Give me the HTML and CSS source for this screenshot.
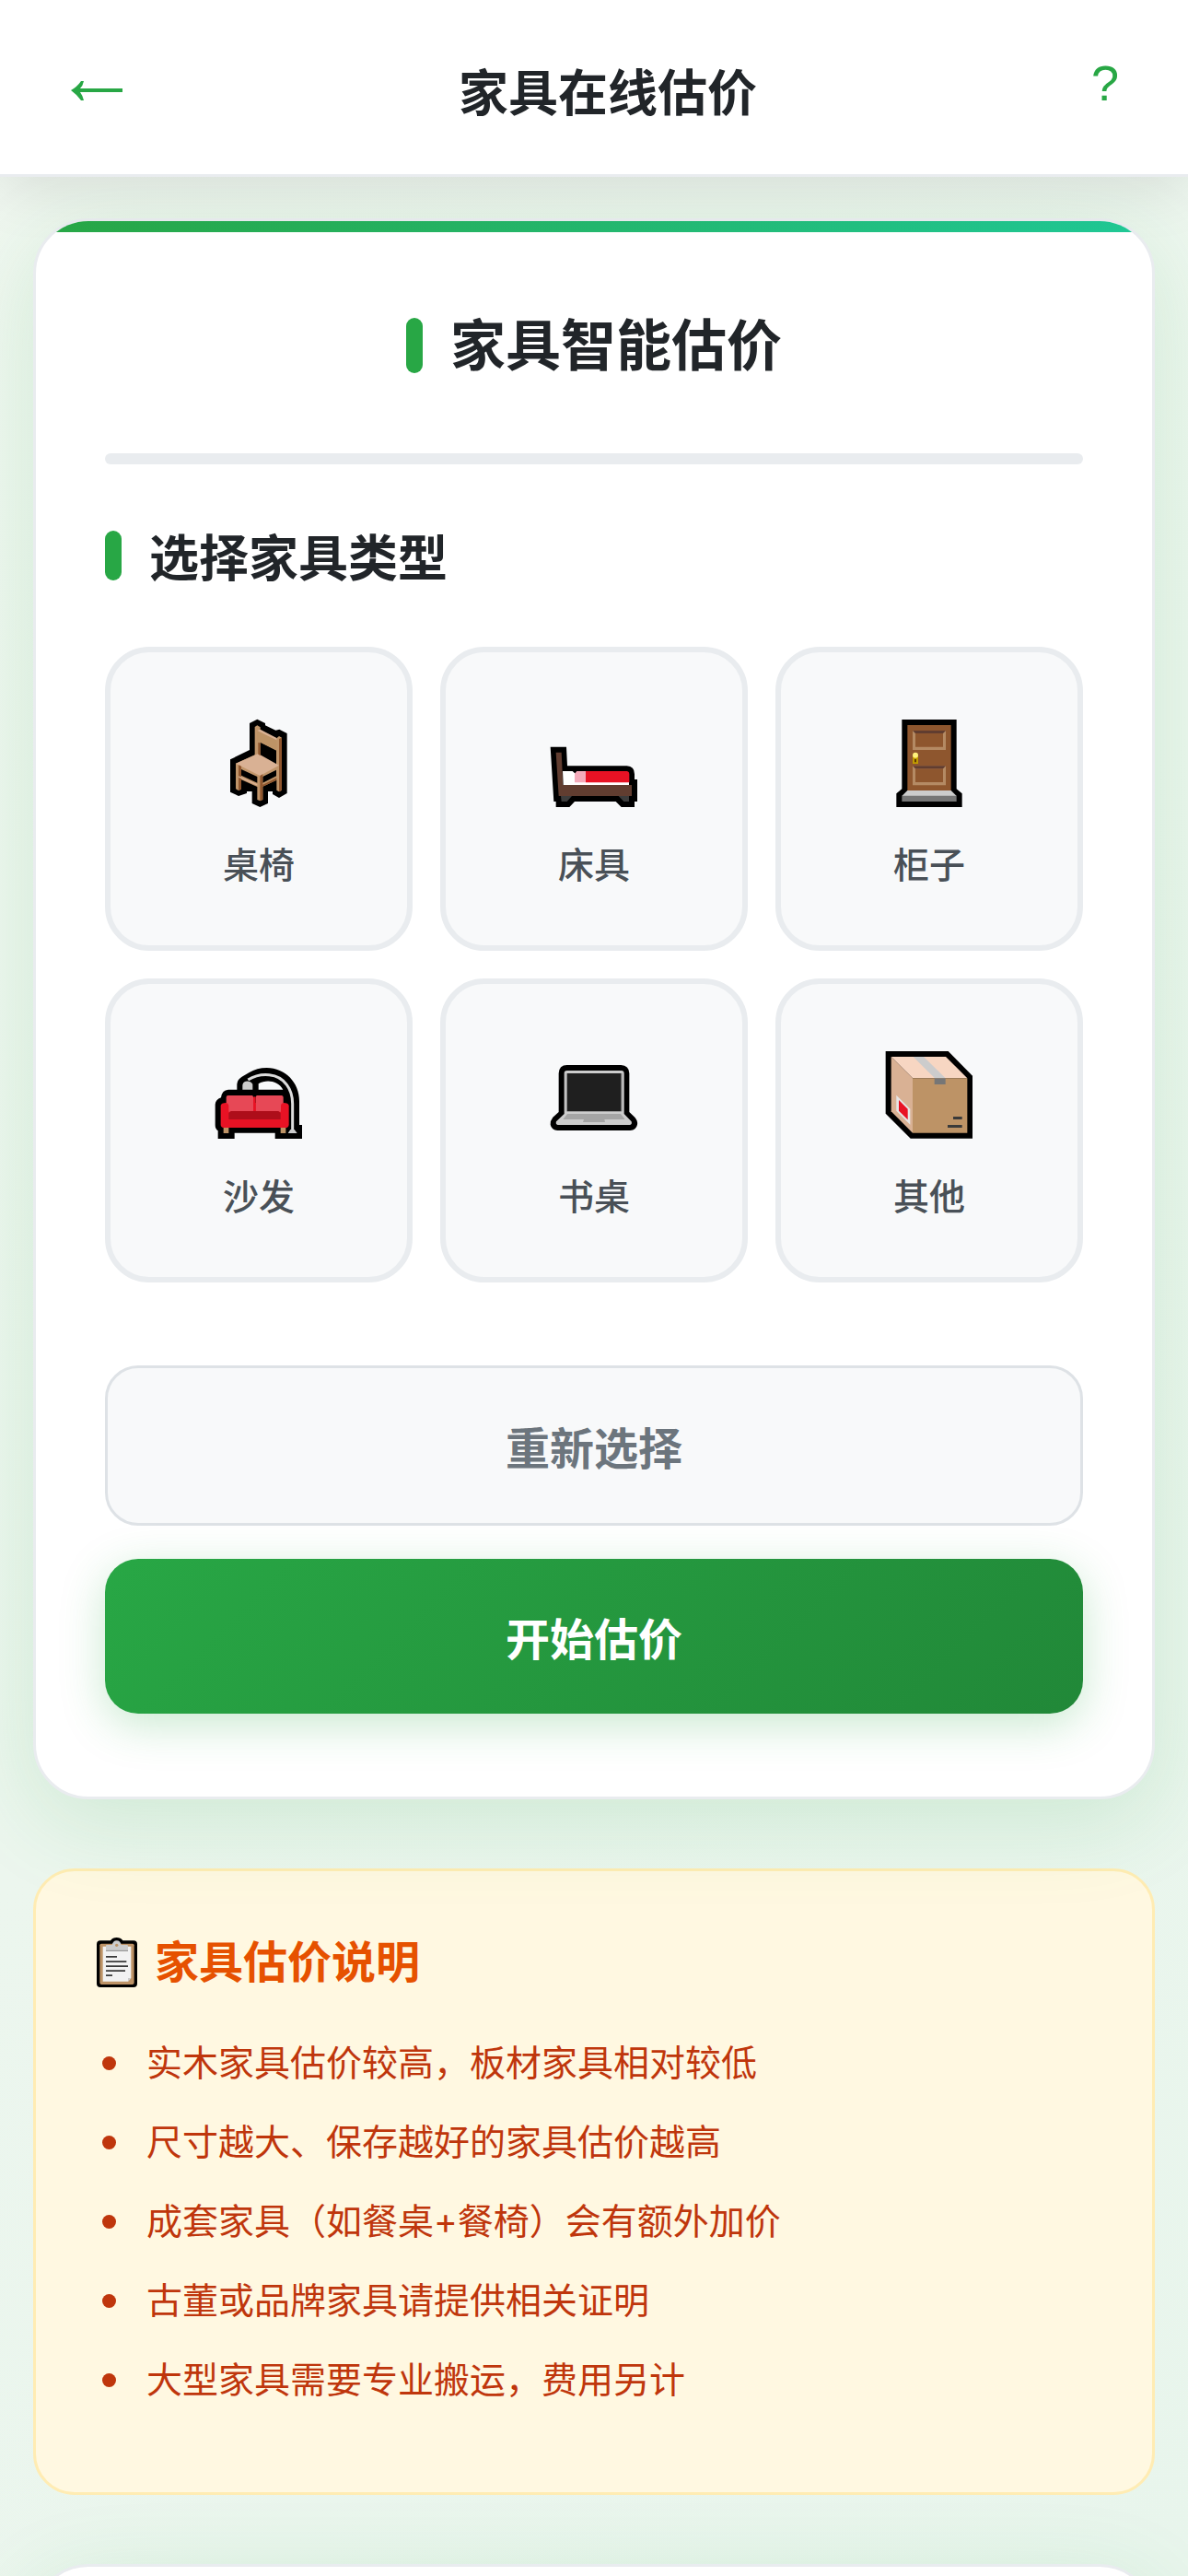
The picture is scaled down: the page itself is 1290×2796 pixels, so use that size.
FILE: index.html
```html
<!DOCTYPE html>
<html lang="zh-CN">
<head>
<meta charset="utf-8">
<meta name="viewport" content="width=device-width, initial-scale=1">
<title>家具在线估价</title>
<link rel="stylesheet" href="styles.css">
</head>
<body>
<header class="topbar">
  <button class="topbar-button" type="button" aria-label="返回">
    <svg class="back-icon" viewBox="0 0 60 60" aria-hidden="true"><path fill="currentColor" d="M2 30Q9 26 13 20H16Q15 25 12 28H58V32H12Q15 36 16 41H13Q9 35 2 30Z"/></svg>
  </button>
  <h1 class="topbar-title">家具在线估价</h1>
  <button class="topbar-button topbar-help" type="button" aria-label="帮助">?</button>
</header>
<main class="content">
  <section class="card card-striped">
    <h2 class="card-title">家具智能估价</h2>
    <hr class="progress">
    <h3 class="section-title">选择家具类型</h3>
    <div class="types">
      <button class="type" type="button">
        <svg class="type-icon" viewBox="39 60 288 288" aria-hidden="true">
          <path d="M153 75 178 62 204 75V82L238 98 250 95 275 108V303L249 318 228 306V297H213V336L187 348 161 336V297H144V303L117 312 90 299V193L153 162Z"/>
          <path fill="#c0956a" d="M170 87 178 82 188 88V98L241 124 249 117 258 122V293L249 298 241 293V260L196 281V324L187 328 178 324V282L126 259V290L117 294 108 289V206L170 178Z"/>
          <path d="M188 137 240 163V210L188 181ZM126 225 178 249V269L126 245ZM196 249 240 227V247L196 269Z"/>
          <path fill="#bd9366" d="M177 99 241 130V164L188 137 177 133Z"/>
          <path fill="#d9b194" d="M108 206 181 174 249 212 187 246ZM188 95 241 123V130L178 99Z"/>
          <path fill="#8f562e" d="M249 126 258 122V293L249 298ZM187 246 196 241V324L187 328ZM117 211 126 215V290L117 294ZM181 137 188 140V181L181 176ZM196 275 241 253V260L196 281Z"/>
          <path fill="#d9b194" d="M118 247 178 273V278L118 252Z"/>
        </svg>
        <span class="type-label">桌椅</span>
      </button>
      <button class="type" type="button">
        <svg class="type-icon" viewBox="51 0 288 288" aria-hidden="true">
          <path d="M53 92H105L108 154H302Q327 155 327 181V198H336V270H327V288H284L266 270H132L115 288H71V270H64Z"/>
          <path fill="#613d30" d="M71 110H89L94 216H318V252H80Z"/>
          <path fill="#fff" d="M93 171H125L134 179H309V216H95Z"/>
          <path fill="#f4aaba" d="M139 171H168V208H132V179Z"/>
          <path fill="#e81224" d="M168 171H303Q310 172 310 180V208H168Z"/>
          <path fill="#3c3c3c" d="M87 252H123L107 270H89ZM275 252H309V270H292Z"/>
        </svg>
        <span class="type-label">床具</span>
      </button>
      <button class="type" type="button">
        <svg class="type-icon" viewBox="33 60 288 288" aria-hidden="true">
          <path d="M88 63H266V289L284 304V348H70V304L88 289Z"/>
          <path fill="#8e562e" d="M106 81H248V294H106Z"/>
          <path fill="#b48a64" d="M123 99H231V162H123ZM123 214H231V277H123Z"/>
          <path fill="#8e562e" d="M132 108H222V152H132ZM132 223H222V267H132Z"/>
          <path fill="#613d30" d="M123 99H231L222 108H132ZM123 214H231L222 223H132Z"/>
          <path fill="#c19c00" d="M123 181H141V207H123Z"/>
          <circle cx="132" cy="179" r="9" fill="#fff27b"/>
          <path fill="#613d00" d="M129 192H135V202H129Z"/>
          <path fill="#ccc" d="M106 294H248L266 312H88Z"/>
          <path fill="#767676" d="M88 311H266V330H88Z"/>
        </svg>
        <span class="type-label">柜子</span>
      </button>
      <button class="type" type="button">
        <svg class="type-icon" viewBox="39 0 288 288" aria-hidden="true">
          <path d="M112 128V110Q113 95 128 86L151 73Q177 57 209 57C270 58 315 105 315 165V243H324V288H236V269H104V288H50V262Q41 256 41 244V176Q42 161 60 154Q63 129 84 128Z"/>
          <path fill="#f8f9fa" d="M182 109C207 94 245 98 262 128H182Z"/>
          <path fill="none" stroke="#dcdcdc" stroke-width="9" d="M148 96C190 70 248 74 274 112Q293 137 293 174V262"/>
          <path fill="#ccc" d="M130 128V113C132 98 154 96 163 110V128ZM286 258H299L308 270H278Z"/>
          <path fill="#bd9366" d="M68 250H85V270H68ZM254 250H271V270H254Z"/>
          <path fill="#e81224" d="M77 171H263Q280 171 281 181V242Q280 252 270 252H68Q59 251 59 242V180Q60 171 77 171Z"/>
          <path fill="#e74856" d="M83 147H161Q165 147 165 152V200H85V180Q84 173 77 171V153Q77 147 83 147ZM178 147H258Q263 148 263 153V171Q255 173 255 180V200H173V152Q173 148 178 147Z"/>
          <path fill="#e81224" d="M165 152Q169 150 173 152V202H165Z"/>
          <path fill="#ae0e1a" d="M92 198H247L254 205V225H85V205Z"/>
        </svg>
        <span class="type-label">沙发</span>
      </button>
      <button class="type" type="button">
        <svg class="type-icon" viewBox="51 0 288 288" aria-hidden="true">
          <path d="M80 75Q81 48 107 48H283Q309 49 310 75V201L328 218Q338 229 336 242Q332 260 313 261H76Q57 260 53 242Q52 229 61 218L80 201Z"/>
          <path fill="#ccc" d="M98 74Q98 66 107 66H284Q293 66 293 75V207L317 232Q320 242 312 243H77Q69 242 72 232L98 207Z"/>
          <path fill="#1f1f1f" d="M107 75H284V199H107Z"/>
          <path fill="#a5a5a5" d="M108 207H282L296 225H229L231 234H159L162 225H94Z"/>
          <path fill="#999" d="M104 75H107V199H104ZM284 75H287V199H284Z"/>
        </svg>
        <span class="type-label">书桌</span>
      </button>
      <button class="type" type="button">
        <svg class="type-icon" viewBox="48 45 288 288" aria-hidden="true">
          <path d="M50 48H254L333 128V332H131L50 251Z"/>
          <path fill="#f7d6c2" d="M68 66H246L316 136H138Z"/>
          <path fill="#d9b194" d="M68 66 138 136V314L68 244Z"/>
          <path fill="#bd9366" d="M138 136H316V314H138Z"/>
          <path fill="#ccc" d="M140 66H174L245 136H210Z"/>
          <path fill="#767676" d="M209 136H245V156H209Z"/>
          <path fill="#e6e6e6" d="M85 191 130 236V287L85 242Z"/>
          <path fill="#e81224" d="M93 207 122 236V271L93 242Z"/>
          <path fill="#3a3a3a" d="M270 261H299V270H270ZM252 288H299V297H252Z"/>
        </svg>
        <span class="type-label">其他</span>
      </button>
    </div>
    <div class="actions">
      <button class="action action-secondary" type="button">重新选择</button>
      <button class="action action-primary" type="button">开始估价</button>
    </div>
  </section>
  <section class="notice">
    <h2 class="notice-title">
      <svg class="notice-icon" viewBox="27 63 162 180" aria-hidden="true">
        <path d="M45 94Q45 82 57 82H90Q97 72 110 72T130 82H165Q177 82 177 94V222Q177 234 165 234H57Q45 234 45 222Z"/>
        <path fill="#bd9366" d="M55 97Q55 92 60 92H162Q167 92 167 97V219Q167 225 161 225H61Q55 225 55 219Z"/>
        <path fill="#f2f2f2" d="M65 101H157V204L147 215H65Z"/>
        <path fill="#ccc" d="M75 98Q75 96 78 96H95Q98 82 110 82T125 96H143Q147 96 147 99V113H75ZM147 215V204H157Z"/>
        <path fill="#999" d="M75 113H147V117H75Z"/>
        <circle cx="110" cy="97" r="5" fill="#bd9366"/>
        <path fill="#3a3a3a" d="M75 132H111V137H75ZM75 148H142V153H75ZM75 163H147V168H75ZM75 178H138V183H75ZM75 193H96V198H75Z"/>
      </svg>
      家具估价说明
    </h2>
    <ul class="notice-list">
      <li>实木家具估价较高，板材家具相对较低</li>
      <li>尺寸越大、保存越好的家具估价越高</li>
      <li>成套家具（如餐桌+餐椅）会有额外加价</li>
      <li>古董或品牌家具请提供相关证明</li>
      <li>大型家具需要专业搬运，费用另计</li>
    </ul>
  </section>
  <section class="card"></section>
</main>
</body>
</html>
```
FILE: styles.css
```css
* { box-sizing: border-box; }

body {
  margin: 0;
  height: 100vh;
  display: flex;
  flex-direction: column;
  background: linear-gradient(135deg, #f0f7f0 0%, #e8f5ec 100%);
  color: #212529;
  font-family: Inter, "Noto Sans CJK SC", sans-serif;
  overflow: hidden;
}

button { font-family: inherit; cursor: pointer; }

h1, h2, h3 { margin: 0; font-weight: 700; }

.topbar-title,
.section-title,
.action { font-family: "Noto Sans CJK SC", sans-serif; }

.topbar {
  position: relative;
  z-index: 1;
  flex: none;
  display: flex;
  align-items: center;
  justify-content: space-between;
  height: 192px;
  padding: 6px 75px 0;
  background: #fff;
  border-bottom: 3px solid #e9ecef;
  box-shadow: 0 12px 60px rgba(0, 0, 0, 0.1);
}

.topbar-title { font-size: 54px; line-height: 84px; }

.topbar-button {
  padding: 0;
  border: 0;
  background: none;
  color: #28a745;
}

.back-icon { display: block; width: 60px; height: 60px; }

.topbar-help {
  padding-bottom: 15px;
  font-family: "Liberation Sans", sans-serif;
  font-size: 54px;
  line-height: 60px;
}

.content {
  flex: 1;
  min-height: 0;
  display: flex;
  flex-direction: column;
  gap: 75px;
  padding: 45px 36px;
  overflow-y: auto;
  scrollbar-width: none;
}

.card {
  position: relative;
  flex: none;
  padding: 90px 75px;
  background: #fff;
  border: 3px solid #e9ecef;
  border-radius: 60px;
  box-shadow: 0 24px 96px rgba(40, 167, 69, 0.15);
  overflow: hidden;
}

.card-striped::before {
  content: "";
  position: absolute;
  top: 0;
  left: 0;
  right: 0;
  height: 12px;
  background: linear-gradient(90deg, #28a745, #20c997);
}

.card-title,
.section-title {
  display: flex;
  align-items: center;
  gap: 30px;
}

.card-title {
  justify-content: center;
  font-size: 60px;
  line-height: 90px;
}

.section-title { font-size: 54px; line-height: 84px; }

.card-title::before,
.section-title::before {
  content: "";
  width: 18px;
  height: 1em;
  border-radius: 9px;
  background: #28a745;
}

.progress {
  height: 12px;
  margin: 72px 0 57px;
  border: 0;
  border-radius: 6px;
  background: #e9ecef;
}

.types {
  display: grid;
  grid-template-columns: repeat(3, 1fr);
  gap: 30px;
  margin: 57px 0 90px;
}

.type {
  display: flex;
  flex-direction: column;
  align-items: center;
  gap: 33px;
  padding: 72px 24px 57px;
  border: 6px solid #e9ecef;
  border-radius: 48px;
  background: #f8f9fa;
  color: #495057;
}

.type-icon { width: 96px; height: 96px; }

.type-label { font-size: 39px; font-weight: 500; line-height: 60px; }

.actions { display: flex; flex-direction: column; gap: 36px; }

.action {
  padding: 48px;
  border: 0;
  border-radius: 36px;
  font-size: 48px;
  font-weight: 700;
  line-height: 72px;
}

.action-secondary {
  border: 3px solid #dee2e6;
  background: #f8f9fa;
  color: #6c757d;
}

.action-primary {
  background: linear-gradient(135deg, #28a745, #218838);
  color: #fff;
  box-shadow: 0 12px 48px rgba(40, 167, 69, 0.25);
}

.notice {
  flex: none;
  padding: 60px;
  border: 3px solid #ffecb3;
  border-radius: 45px;
  background: #fff8e1;
}

.notice-title {
  display: flex;
  align-items: center;
  gap: 15px;
  color: #e65100;
  font-size: 48px;
  line-height: 78px;
}

.notice-icon { width: 54px; height: 60px; }

.notice-list {
  display: flex;
  flex-direction: column;
  gap: 24px;
  margin: 39px 0 31px;
  padding: 0 12px;
  list-style: none;
  color: #bf360c;
  font-size: 39px;
  line-height: 62px;
}

.notice-list li { display: flex; align-items: center; gap: 33px; }

.notice-list li::before {
  content: "";
  flex: none;
  width: 15px;
  height: 15px;
  border-radius: 50%;
  background: currentColor;
}
```
